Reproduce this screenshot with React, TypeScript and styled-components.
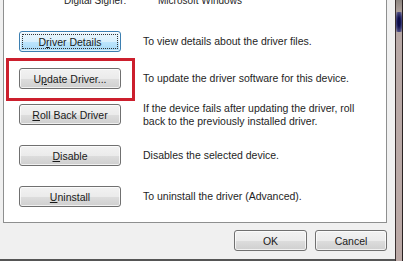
import React from 'react';
import styled, { createGlobalStyle } from 'styled-components';

const GlobalStyle = createGlobalStyle`
  html, body {
    margin: 0;
    padding: 0;
    background: #ffffff;
    overflow: hidden;
  }
  body {
    font-family: "Liberation Sans", Arial, sans-serif;
    font-size: 10px;
    color: #1e1e1e;
  }
`;

const Screen = styled.div`
  width: 414px;
  height: 261px;
  display: flex;
  position: relative;
  overflow: hidden;
`;

const Dialog = styled.div`
  width: 395px;
  height: 261px;
  background: #f0f0f0;
  display: flex;
  flex-direction: column;
  border-bottom: 2px solid #555555;
  box-sizing: border-box;
`;

const Panel = styled.div`
  margin: -12px 8px 0 3px;
  height: 235px;
  box-sizing: border-box;
  background: #ffffff;
  border: 1px solid #8e8f8f;
  border-top: none;
  padding: 7px 0 0 15px;
  display: flex;
  flex-direction: column;
`;

const InfoRow = styled.div`
  display: flex;
  height: 12px;
  line-height: 12px;
`;

const InfoLabel = styled.span`
  width: 94px;
  padding-left: 45px;
`;

const ActionRow = styled.div<{ $top: number }>`
  display: flex;
  align-items: center;
  margin-top: ${(p) => p.$top}px;
  min-height: 21px;
`;

const Button = styled.button<{ $focused?: boolean; $w?: number }>`
  width: ${(p) => p.$w ?? 102}px;
  height: 21px;
  padding: 0;
  box-sizing: border-box;
  font-family: "Liberation Sans", Arial, sans-serif;
  font-size: 10.5px;
  color: #1a1a1a;
  border-radius: 3px;
  border: 1px solid ${(p) => (p.$focused ? '#3c7fb1' : '#707070')};
  background: ${(p) =>
    p.$focused
      ? 'linear-gradient(#eaf6fd 0%, #d9f0fc 50%, #bee6fd 51%, #a7d9f5 100%)'
      : 'linear-gradient(#f2f2f2 0%, #ebebeb 50%, #dddddd 51%, #cfcfcf 100%)'};
  box-shadow: inset 0 0 0 1px rgba(255, 255, 255, 0.7);
  position: relative;
  flex-shrink: 0;
  &::after {
    content: '';
    display: ${(p) => (p.$focused ? 'block' : 'none')};
    position: absolute;
    inset: 2px;
    border: 1px dotted #333;
  }
  u {
    text-decoration: underline;
  }
`;

const Desc = styled.div`
  margin-left: 22px;
  font-size: 10.5px;
  line-height: 12.5px;
  color: #1e1e1e;
  white-space: nowrap;
`;

const Footer = styled.div`
  flex: 1;
  display: flex;
  justify-content: flex-end;
  align-items: flex-start;
  gap: 8px;
  padding: 7px 8px 0 0;
`;

const Highlight = styled.div`
  position: absolute;
  left: 6px;
  top: 58px;
  width: 129px;
  height: 43px;
  box-sizing: border-box;
  border: 3px solid #cc1f2d;
  pointer-events: none;
`;

const BackBar = styled.div`
  width: 8px;
  height: 261px;
  box-sizing: border-box;
  border-left: 1px solid #3a3030;
  border-right: 1px solid #2a2222;
  background: linear-gradient(#8c8580 0px, #a89c98 10px, #b8a9a7 40px, #bba9a6 100%);
  position: relative;
`;

const Thumb = styled.div`
  position: absolute;
  left: 0;
  right: 0;
  top: 12px;
  height: 20px;
  background: radial-gradient(ellipse at center, #0c0c4a 30%, #4a4a80 70%, rgba(180, 170, 170, 0) 100%);
`;

const Rest = styled.div`
  flex: 1;
  background: #ffffff;
`;

export default function App() {
  return (
    <>
      <GlobalStyle />
      <Screen>
        <Dialog>
          <Panel>
            <InfoRow>
              <InfoLabel>Digital Signer:</InfoLabel>
              <span>Microsoft Windows</span>
            </InfoRow>
            <ActionRow $top={24}>
              <Button $focused>
                D<u>r</u>iver Details
              </Button>
              <Desc>To view details about the driver files.</Desc>
            </ActionRow>
            <ActionRow $top={16}>
              <Button>
                U<u>p</u>date Driver...
              </Button>
              <Desc>To update the driver software for this device.</Desc>
            </ActionRow>
            <ActionRow $top={13}>
              <Button>
                <u>R</u>oll Back Driver
              </Button>
              <Desc>
                If the device fails after updating the driver, roll
                <br />
                back to the previously installed driver.
              </Desc>
            </ActionRow>
            <ActionRow $top={18}>
              <Button>
                <u>D</u>isable
              </Button>
              <Desc>Disables the selected device.</Desc>
            </ActionRow>
            <ActionRow $top={20}>
              <Button>
                <u>U</u>ninstall
              </Button>
              <Desc>To uninstall the driver (Advanced).</Desc>
            </ActionRow>
          </Panel>
          <Footer>
            <Button $w={73}>OK</Button>
            <Button $w={72}>Cancel</Button>
          </Footer>
        </Dialog>
        <BackBar>
          <Thumb />
        </BackBar>
        <Rest />
        <Highlight />
      </Screen>
    </>
  );
}
